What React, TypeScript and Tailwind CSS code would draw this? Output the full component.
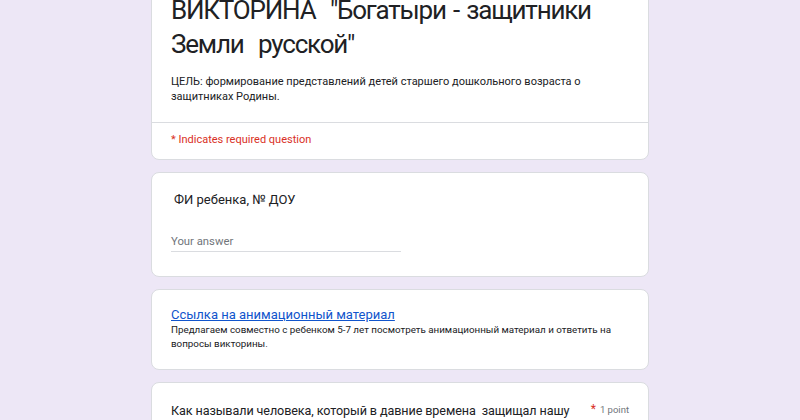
export default function App() {
  return (
    <div className="min-h-screen h-[420px] overflow-hidden bg-[#ede7f6] font-['Roboto',sans-serif]">
      <div className="mx-auto w-[498px] -mt-[27px] flex flex-col gap-3">
        {/* Header card */}
        <div className="rounded-lg bg-white border border-[#dadce0]">
          <div className="px-[19px] pt-[19px] pb-[18px]">
            <h1 className="text-[26px] leading-[34px] text-[#202124] tracking-[-1.2px] [word-spacing:2px]">
              ВИКТОРИНА&nbsp; "Богатыри - защитники Земли&nbsp; русской"
            </h1>
            <p className="mt-[13px] text-[11px] leading-[15px] text-[#202124]">
              ЦЕЛЬ: формирование представлений детей старшего дошкольного возраста о защитниках Родины.
            </p>
          </div>
          <div className="border-t border-[#dadce0] px-[19px] pt-[9px] pb-[11px]">
            <p className="text-[11px] leading-[16px] text-[#d93025]">* Indicates required question</p>
          </div>
        </div>

        {/* Question card */}
        <div className="rounded-lg bg-white border border-[#dadce0] h-[105px] px-[19px] pt-[17px]">
          <p className="pl-[3px] text-[13px] leading-[20px] text-[#202124]">ФИ ребенка, № ДОУ</p>
          <div className="mt-[25px] w-[230px] border-b border-[#dadce0] pb-[2px]">
            <span className="block text-[11.3px] leading-[14px] text-[#70757a]">Your answer</span>
          </div>
        </div>

        {/* Link card */}
        <div className="rounded-lg bg-white border border-[#dadce0] h-[81px] px-[19px] pt-[16px]">
          <a href="#" className="block text-[13px] leading-[17px] text-[#1155cc] underline">
            Ссылка на анимационный материал
          </a>
          <p className="text-[9.8px] leading-[14px] text-[#202124]">
            Предлагаем совместно с ребенком 5-7 лет посмотреть анимационный материал и ответить на вопросы викторины.
          </p>
        </div>

        {/* Question card */}
        <div className="rounded-lg bg-white border border-[#dadce0] h-[80px] px-[19px] pt-[18px] flex gap-2">
          <p className="flex-1 text-[12.6px] leading-[20px] text-[#202124] tracking-[-0.1px]">
            Как называли человека, который в давние времена&nbsp; защищал нашу землю?
          </p>
          <div className="flex items-start gap-[4px] pt-[1px]">
            <span className="text-[12px] leading-[14px] text-[#d93025]">*</span>
            <span className="text-[9.5px] leading-[16px] text-[#70757a]">1 point</span>
          </div>
        </div>
      </div>
    </div>
  );
}
